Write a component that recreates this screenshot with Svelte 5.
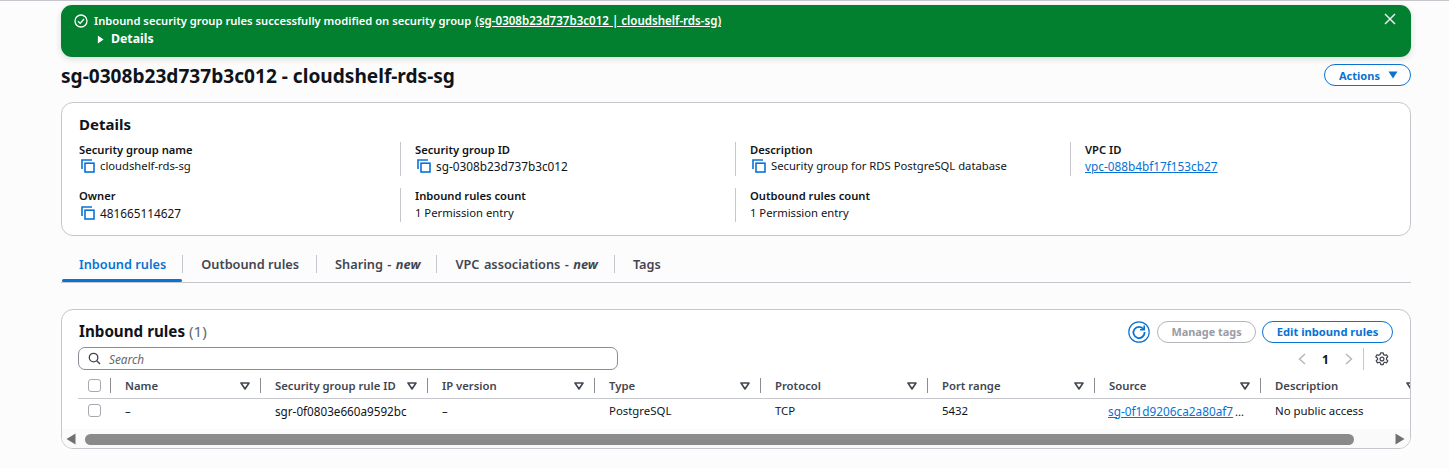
<script>
  const details = [
    [
      { label: 'Security group name', value: 'cloudshelf-rds-sg', copy: true },
      { label: 'Owner', value: '481665114627', copy: true, id: true }
    ],
    [
      { label: 'Security group ID', value: 'sg-0308b23d737b3c012', copy: true, id: true },
      { label: 'Inbound rules count', value: '1 Permission entry' }
    ],
    [
      { label: 'Description', value: 'Security group for RDS PostgreSQL database', copy: true },
      { label: 'Outbound rules count', value: '1 Permission entry' }
    ],
    [{ label: 'VPC ID', value: 'vpc-088b4bf17f153cb27', link: true, id: true }]
  ];
  const cols = [
    { name: 'Name', w: 150, val: '–' },
    { name: 'Security group rule ID', w: 167, val: 'sgr-0f0803e660a9592bc', id: true },
    { name: 'IP version', w: 167, val: '–' },
    { name: 'Type', w: 166, val: 'PostgreSQL' },
    { name: 'Protocol', w: 167, val: 'TCP' },
    { name: 'Port range', w: 167, val: '5432' },
    { name: 'Source', w: 166, val: 'sg-0f1d9206ca2a80af7', link: true, id: true },
    { name: 'Description', w: 166, val: 'No public access' }
  ];
</script>

{#snippet copy()}
  <svg class="copy" viewBox="0 0 14 14" width="14" height="14" aria-hidden="true">
    <path d="M1 10V1h10" fill="none" stroke="#0972d3" stroke-width="1.6" />
    <rect x="4" y="4.2" width="9" height="8.8" fill="none" stroke="#0972d3" stroke-width="1.6" />
  </svg>
{/snippet}

{#snippet sortIcon()}
  <svg class="sort" viewBox="0 0 10 8" width="10" height="8" aria-hidden="true">
    <path d="M1 1h8L5 7z" fill="none" stroke="#424650" stroke-width="1.6" stroke-linejoin="round" />
  </svg>
{/snippet}

<div class="page">
  <div class="flash">
    <div class="flash-body">
      <svg class="ok" viewBox="0 0 14 14" width="14" height="14" aria-hidden="true">
        <circle cx="7" cy="7" r="6" fill="none" stroke="#fff" stroke-width="1.3" />
        <path d="M4 7.2l2.2 2.2L10 5" fill="none" stroke="#fff" stroke-width="1.3" />
      </svg>
      <div>
        <div class="flash-title">Inbound security group rules successfully modified on security group <u>(sg-0308b23d737b3c012 | cloudshelf-rds-sg)</u></div>
        <div class="flash-details">
          <svg viewBox="0 0 8 10" width="7" height="9" aria-hidden="true"><path d="M1 0.5l6.5 4.5L1 9.500z" fill="#fff" /></svg>
          <span>Details</span>
        </div>
      </div>
    </div>
    <svg class="close" viewBox="0 0 12 12" width="12" height="12" aria-hidden="true">
      <path d="M1 1l10 10M11 1L1 11" stroke="#e8f0ea" stroke-width="1.5" fill="none" />
    </svg>
  </div>

  <div class="head">
    <h1>sg-0308b23d737b3c012 - cloudshelf-rds-sg</h1>
    <button class="btn primary actions">Actions
      <svg viewBox="0 0 10 8" width="10" height="8" aria-hidden="true"><path d="M0.5 0.5h9L5 7.500z" fill="#0972d3" /></svg>
    </button>
  </div>

  <section class="card details">
    <h2>Details</h2>
    <div class="grid">
      {#each details as col, i}
        <div class="col" class:first={i === 0}>
          {#each col as item}
            <div class="item">
              <div class="label">{item.label}</div>
              <div class="value" class:idv={item.id}>
                {#if item.copy}{@render copy()}{/if}
                {#if item.link}<a href="#top">{item.value}</a>{:else}<span>{item.value}</span>{/if}
              </div>
            </div>
          {/each}
        </div>
      {/each}
    </div>
  </section>

  <nav class="tabs">
    <div class="tab active">Inbound rules</div>
    <div class="tab outbound">Outbound rules</div>
    <div class="tab spaced">Sharing - <em>new</em></div>
    <div class="tab spaced">VPC associations - <em>new</em></div>
    <div class="tab">Tags</div>
  </nav>

  <section class="card rules">
    <div class="rules-head">
      <h2>Inbound rules <span>(1)</span></h2>
      <div class="rules-actions">
        <button class="refresh" aria-label="Refresh">
          <svg viewBox="0 0 22 22" width="22" height="22" aria-hidden="true">
            <circle cx="11" cy="11" r="10.2" fill="none" stroke="#0972d3" stroke-width="1.2" />
            <path d="M15.6 8.2A5.6 5.6 0 1 0 16.6 11" fill="none" stroke="#0972d3" stroke-width="1.8" />
            <path d="M16.2 4.6v4.2h-4.2" fill="none" stroke="#0972d3" stroke-width="1.6" />
          </svg>
        </button>
        <button class="btn disabled">Manage tags</button>
        <button class="btn primary edit">Edit inbound rules</button>
      </div>
    </div>
    <div class="search-row">
      <div class="search">
        <svg viewBox="0 0 14 14" width="13" height="13" aria-hidden="true">
          <circle cx="6" cy="6" r="4.6" fill="none" stroke="#424650" stroke-width="1.4" />
          <path d="M9.4 9.4L13 13" stroke="#424650" stroke-width="1.5" />
        </svg>
        <span>Search</span>
      </div>
    </div>
    <div class="pager">
      <svg viewBox="0 0 8 12" width="8" height="12" aria-hidden="true"><path d="M7 1L1.500 6 7 11" fill="none" stroke="#b4b4bb" stroke-width="1.4" /></svg>
      <b>1</b>
      <svg viewBox="0 0 8 12" width="8" height="12" aria-hidden="true"><path d="M1 1l5.500 5L1 11" fill="none" stroke="#b4b4bb" stroke-width="1.4" /></svg>
      <i class="pager-sep"></i>
      <svg viewBox="0 0 16 16" width="14" height="14" aria-hidden="true">
        <path d="M6.600 1h2.800l.4 2 1.500.8 1.900-.7 1.400 2.400-1.500 1.400v1.700l1.500 1.400-1.400 2.400-1.900-.7-1.500.8-.4 2H6.600l-.4-2-1.500-.8-1.900.7-1.400-2.400 1.500-1.400V7.100L.9 5.500l1.400-2.400 1.900.7 1.500-.8z" fill="none" stroke="#424650" stroke-width="1.4" stroke-linejoin="round" />
        <circle cx="8" cy="8" r="2.200" fill="none" stroke="#424650" stroke-width="1.400" />
      </svg>
    </div>
    <div class="table-wrap">
      <div class="row hrow">
        <div class="check"><i></i></div>
        {#each cols as c}
          <div class="th" style="width:{c.w}px"><span>{c.name}</span>{@render sortIcon()}</div>
        {/each}
      </div>
      <div class="row brow">
        <div class="check"><i></i></div>
        {#each cols as c}
          <div class="td" class:tdid={c.id} style="width:{c.w}px">{#if c.link}<a class="src" href="#top">{c.val} </a><span class="ell">…</span>{:else}{c.val}{/if}</div>
        {/each}
      </div>
    </div>
    <div class="scroll">
      <svg viewBox="0 0 10 12" width="10" height="12" aria-hidden="true"><path d="M9.500 0.500v11L0.500 6z" fill="#707070" /></svg>
      <div class="track"><div class="thumb"></div></div>
      <svg viewBox="0 0 10 12" width="10" height="12" aria-hidden="true"><path d="M0.500 0.500v11L9.500 6z" fill="#707070" /></svg>
    </div>
  </section>
</div>

<style>
  :global(body) {
    margin: 0;
    background: #fcfcfc;
  }
  .page {
    box-sizing: border-box;
    width: 1449px;
    height: 468px;
    overflow: hidden;
    padding: 5px 38px 0 61px;
    border-top: 1px solid #c6c6cd;
    font-family: "Noto Sans", "Open Sans", sans-serif;
    font-size: 12px;
    color: #0f141a;
  }
  .flash {
    box-sizing: border-box;
    height: 52px;
    margin-top: -1px;
    background: #037f30;
    border-radius: 11px;
    box-shadow: 0 2px 6px rgba(0, 28, 36, 0.15);
    color: #fff;
    display: flex;
    justify-content: space-between;
    padding: 8px 15px 0 13px;
  }
  .flash-body {
    display: flex;
    gap: 6px;
  }
  .ok {
    margin-top: 1px;
  }
  .flash-title {
    font-weight: 600;
    line-height: 15px;
    font-size: 11.2px;
  }
  .flash-title u {
    font-size: 11.55px;
    margin-left: 1px;
  }
  .flash-details {
    display: flex;
    align-items: center;
    gap: 7px;
    margin: 3px 0 0 3px;
    font-weight: 700;
    font-size: 12.3px;
    line-height: 16px;
  }
  .head {
    display: flex;
    justify-content: space-between;
    align-items: flex-start;
    margin-top: 6px;
    height: 39px;
  }
  h1 {
    margin: 0;
    font-size: 19.1px;
    font-weight: 700;
    line-height: 26px;
  }
  .btn {
    box-sizing: border-box;
    height: 22px;
    border-radius: 11px;
    background: #fff;
    font: 700 11.2px "Noto Sans", sans-serif;
    padding: 0 14px 1px;
    border: 1px solid;
    flex: none;
  }
  .actions {
    margin-top: 1px;
    display: flex;
    align-items: center;
    gap: 8px;
    width: 87px;
    font-size: 11px;
    padding-bottom: 0;
  }
  .actions svg {
    flex: none;
  }
  .primary {
    color: #0972d3;
    border-color: #0972d3;
  }
  .edit {
    width: 131px;
    padding: 0 0 1px;
  }
  .disabled {
    color: #9a9ba3;
    border-color: #b4b4bb;
    font-size: 10.9px;
    width: 99px;
    padding: 0 0 1px;
  }
  .card {
    box-sizing: border-box;
    background: #fff;
    border: 1px solid #c6c6cd;
    border-radius: 12px;
  }
  .details {
    height: 134px;
    padding: 11px 17px 0;
  }
  h2 {
    margin: 0;
    font-size: 15px;
    line-height: 20px;
    font-weight: 700;
  }
  .grid {
    display: grid;
    grid-template-columns: 321px 335px 335px 1fr;
    margin-top: 8px;
  }
  .item {
    height: 34px;
    margin-bottom: 12px;
    padding-left: 14px;
    border-left: 1px solid #c6c6cd;
  }
  .col.first .item {
    padding-left: 0;
    border-left: 0;
  }
  .label {
    font-weight: 600;
    font-size: 11.2px;
    line-height: 15px;
  }
  .value {
    display: flex;
    align-items: center;
    gap: 5px;
    font-size: 11.25px;
    line-height: 18px;
  }
  .value.idv {
    font-size: 11.8px;
  }
  .item + .item .value {
    margin-top: 1px;
  }
  .copy {
    margin-left: 2px;
    flex: none;
  }
  a {
    color: #0972d3;
    text-decoration: underline;
  }
  .tabs {
    box-sizing: border-box;
    display: flex;
    align-items: center;
    height: 47px;
    padding: 10px 0 0 1px;
    border-bottom: 1px solid #c6c6cd;
  }
  .tab {
    font-weight: 600;
    font-size: 12.75px;
    color: #424650;
    padding: 0 16px 0 18px;
    line-height: 18px;
    border-left: 1px solid #c6c6cd;
    position: relative;
  }
  .tab:first-child {
    border-left: 0;
    padding-left: 17px;
  }
  .tab.outbound {
    padding-right: 17px;
  }
  .tab.spaced {
    word-spacing: 1.1px;
  }
  .tab em {
    font-weight: 700;
  }
  .active {
    color: #0972d3;
  }
  .active::after {
    content: "";
    position: absolute;
    left: 0;
    right: 0;
    bottom: -9px;
    height: 3px;
    background: #0972d3;
    border-radius: 2px;
  }
  .rules {
    height: 140px;
    margin-top: 26px;
    padding: 0;
    position: relative;
    overflow: hidden;
  }
  .rules-head {
    display: flex;
    justify-content: space-between;
    align-items: flex-start;
    padding: 11px 17px 0 17px;
    height: 26px;
  }
  .rules-head h2 {
    font-size: 15.2px;
  }
  .rules-head h2 span {
    font-weight: 400;
    color: #656871;
  }
  .rules-actions {
    display: flex;
    align-items: center;
    gap: 6px;
  }
  .refresh {
    padding: 0;
    margin-right: 1px;
    border: 0;
    background: none;
    display: flex;
  }
  .search-row {
    padding: 0 16px;
  }
  .search {
    box-sizing: border-box;
    width: 540px;
    height: 23px;
    border: 1px solid #8c8c94;
    border-radius: 7px;
    display: flex;
    align-items: center;
    gap: 8px;
    padding-left: 9px;
    font-size: 11.8px;
    font-style: italic;
    color: #656871;
  }
  .pager {
    position: absolute;
    top: 38px;
    right: 21px;
    display: flex;
    align-items: center;
    height: 22px;
  }
  .pager b {
    width: 39px;
    text-align: center;
    font-size: 12px;
  }
  .pager-sep {
    width: 1px;
    height: 22px;
    background: #c6c6cd;
    margin: 0 11px 0 10px;
  }
  .table-wrap {
    margin: 3px 0 0 16px;
    overflow: hidden;
    width: 1332px;
  }
  .row {
    display: flex;
  }
  .hrow {
    height: 25px;
    align-items: center;
    border-bottom: 1px solid #c6c6cd;
  }
  .brow {
    height: 23px;
    align-items: center;
  }
  .check {
    width: 32px;
    flex: none;
  }
  .check i {
    display: block;
    box-sizing: border-box;
    width: 13px;
    height: 13px;
    margin-left: 10px;
    border: 1px solid #a8a8b0;
    border-radius: 3px;
    background: #fff;
  }
  .th {
    box-sizing: border-box;
    flex: none;
    display: flex;
    justify-content: space-between;
    align-items: center;
    font-weight: 600;
    font-size: 11.3px;
    color: #424650;
    padding: 0 10px 0 14px;
    height: 15px;
    border-left: 1px solid #8c8c94;
  }
  .td {
    box-sizing: border-box;
    flex: none;
    padding-left: 15px;
    font-size: 11.4px;
    white-space: pre;
  }
  .tdid {
    font-size: 11.7px;
  }
  .src {
    font-size: 11.8px;
    margin-left: -1px;
  }
  .ell {
    font-size: 11.4px;
    margin-left: 2px;
  }
  .scroll {
    box-sizing: border-box;
    position: absolute;
    left: 0;
    right: 0;
    bottom: 0;
    height: 19px;
    padding: 0 5px 3px 4px;
    background: #fafafa;
    display: flex;
    align-items: flex-end;
    gap: 9px;
  }
  .track {
    flex: 1;
    height: 11px;
  }
  .thumb {
    width: 1269px;
    height: 11px;
    border-radius: 6px;
    background: #8a8a8a;
  }
</style>
